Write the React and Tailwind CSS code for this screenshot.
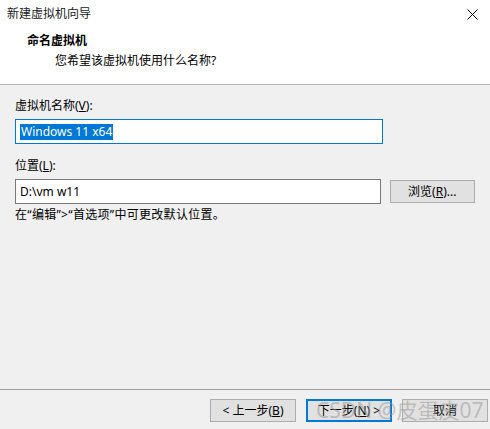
import React from "react"

const font = "font-['Noto_Sans','Noto_Sans_CJK_SC',sans-serif]"

function WinButton({ children, primary }) {
  return (
    <button
      className={`w-[86px] h-[23px] bg-[#e1e1e1] text-[12px] leading-none text-black flex items-center justify-center ${primary ? "border-2 border-[#0078d7]" : "border border-[#adadad]"}`}
    >
      {children}
    </button>
  )
}

export default function App() {
  return (
    <div className={`relative w-[490px] h-[429px] bg-[#f0f0f0] flex flex-col ${font} text-[12px] text-black`}>
      {/* header */}
      <div className="h-[85px] bg-white border-b border-[#b4b4b4] flex flex-col">
        <div className="flex items-start justify-between pl-[7px] pr-[12px] pt-[6px]">
          <span className="leading-[16px] text-[#1a1a1a]">新建虚拟机向导</span>
          <svg width="11" height="11" viewBox="0 0 11 11" className="mt-[3px]">
            <path d="M0.5 0.5 L10.5 10.5 M10.5 0.5 L0.5 10.5" stroke="#000" strokeWidth="1" />
          </svg>
        </div>
        <div className="pl-[27px] mt-[11px] font-bold leading-[16px]">命名虚拟机</div>
        <div className="pl-[55px] mt-[4px] leading-[16px]">您希望该虚拟机使用什么名称?</div>
      </div>

      {/* body */}
      <div className="flex-1 px-[15px] flex flex-col">
        <div className="mt-[13px] leading-[16px]">
          虚拟机名称(<u>V</u>):
        </div>
        <div className="mt-[5px] w-[368px] h-[25px] bg-white border border-[#0078d7] flex items-center pl-[4px]">
          <span className="bg-[#0078d7] text-white leading-[16px] px-[1px]">Windows 11 x64</span>
        </div>

        <div className="mt-[14px] leading-[16px]">
          位置(<u>L</u>):
        </div>
        <div className="mt-[5px] flex items-center gap-[9px]">
          <div className="w-[368px] h-[25px] bg-white border border-[#7a7a7a] flex items-center pl-[4px]">
            <span className="leading-[16px]">D:\vm w11</span>
          </div>
          <WinButton>
            浏览(<u>R</u>)...
          </WinButton>
        </div>
        <div className="mt-[3px] leading-[16px] tracking-[0.3px]">在“编辑”&gt;“首选项”中可更改默认位置。</div>
      </div>

      {/* footer */}
      <div className="border-t border-[#a0a0a0] h-[40px] flex items-start justify-end gap-[10px] pt-[9px] pr-[2px]">
        <WinButton>
          &lt; 上一步(<u>B</u>)
        </WinButton>
        <WinButton primary>
          下一步(<u>N</u>) &gt;
        </WinButton>
        <WinButton>取消</WinButton>
      </div>

      <div className="absolute left-[316px] top-[397px] text-[21px] leading-[26px] text-[#9a9a9a]/55 pointer-events-none whitespace-nowrap">
        CSDN @皮蛋皮07
      </div>
    </div>
  )
}
